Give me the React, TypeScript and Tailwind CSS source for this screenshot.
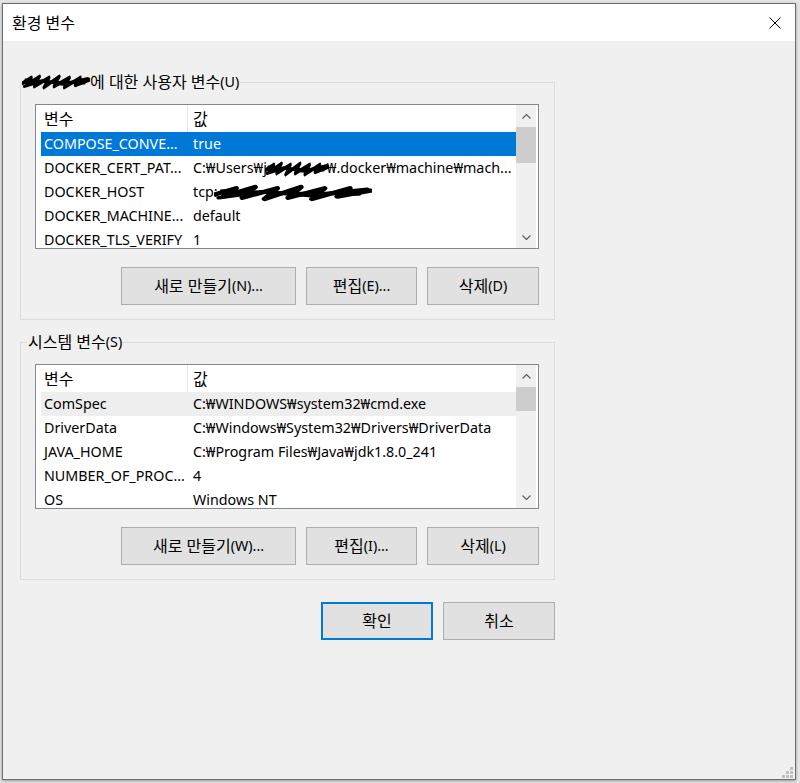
import React from 'react';

type Row = { name: string; value: React.ReactNode };

// Korean glyphs render a touch larger than the Latin ones in the original dialog
function K({ children }: { children: React.ReactNode }) {
  return <span className="text-[16px] leading-none">{children}</span>;
}

function Scribble({ className }: { className: string }) {
  return (
    <svg
      className={className}
      viewBox="0 0 100 20"
      preserveAspectRatio="none"
      fill="none"
      stroke="black"
      strokeLinecap="round"
      strokeLinejoin="round"
    >
      <path
        d="M1 11 L14 6 L6 13 L26 5 L18 14 L40 6 L32 15 L55 5 L47 14 L70 6 L62 15 L86 6 L78 13 L99 8"
        strokeWidth="3.6"
      />
      <path d="M3 14 L30 9 L60 12 L97 7" strokeWidth="3" />
      <path d="M5 8 L45 10 L92 11" strokeWidth="2.4" />
    </svg>
  );
}

function Chevron({ down }: { down?: boolean }) {
  return (
    <svg width="9" height="5" viewBox="0 0 9 5" fill="none" stroke="#606060" strokeWidth="1.2">
      {down ? <polyline points="0.5,0.5 4.5,4.5 8.5,0.5" /> : <polyline points="0.5,4.5 4.5,0.5 8.5,4.5" />}
    </svg>
  );
}

function ListView({
  rows,
  selected,
  tone,
  thumb,
}: {
  rows: Row[];
  selected: number;
  tone: 'blue' | 'gray';
  thumb: string;
}) {
  return (
    <div className="mt-[12px] w-[504px] h-[145px] border border-[#828790] bg-white flex overflow-hidden">
      <div className="w-[480px] flex flex-col overflow-hidden">
        {/* header */}
        <div className="h-[27px] shrink-0 flex items-stretch">
          <div className="w-[151px] pl-[8px] flex items-center">
            <K>변수</K>
          </div>
          <div className="w-px bg-[#e5e5e5]" />
          <div className="pl-[5px] flex items-center">
            <K>값</K>
          </div>
        </div>
        {rows.map((r, i) => {
          const sel = i === selected;
          const bg = sel ? (tone === 'blue' ? 'bg-[#0078d7] text-white' : 'bg-[#eeeeee]') : '';
          return (
            <div key={i} className={`ml-[5px] w-[475px] h-[24px] shrink-0 flex items-center whitespace-nowrap ${bg}`}>
              <div className="w-[147px] pl-[3px] overflow-hidden">{r.name}</div>
              <div className="pl-[5px] flex-1 overflow-hidden">{r.value}</div>
            </div>
          );
        })}
      </div>
      {/* scrollbar */}
      <div className="w-[20px] bg-[#f0f0f0] flex flex-col">
        <div className="h-[22px] flex items-center justify-center">
          <Chevron />
        </div>
        <div className={`${thumb} bg-[#cdcdcd]`} />
        <div className="flex-1" />
        <div className="h-[22px] flex items-center justify-center">
          <Chevron down />
        </div>
      </div>
    </div>
  );
}

function Btn({ w, children, primary }: { w: string; children: React.ReactNode; primary?: boolean }) {
  return (
    <button
      className={`${w} h-[38px] bg-[#e1e1e1] flex items-center justify-center ${
        primary ? 'border-2 border-[#0078d7]' : 'border border-[#adadad]'
      }`}
    >
      {children}
    </button>
  );
}

const userRows: Row[] = [
  { name: 'COMPOSE_CONVE...', value: 'true' },
  {
    name: 'DOCKER_CERT_PAT...',
    value: (
      <span>
        C:₩Users₩j
        <span className="relative inline-block w-[60px] h-[16px] align-middle">
          <Scribble className="absolute -left-[2px] -top-[3px] w-[64px] h-[22px]" />
        </span>
        ₩.docker₩machine₩mach...
      </span>
    ),
  },
  {
    name: 'DOCKER_HOST',
    value: (
      <span>
        tcp:
        <span className="relative inline-block w-[150px] h-[16px] align-middle">
          <Scribble className="absolute -left-[4px] -top-[4px] w-[158px] h-[24px]" />
        </span>
      </span>
    ),
  },
  { name: 'DOCKER_MACHINE...', value: 'default' },
  { name: 'DOCKER_TLS_VERIFY', value: '1' },
];

const sysRows: Row[] = [
  { name: 'ComSpec', value: 'C:₩WINDOWS₩system32₩cmd.exe' },
  { name: 'DriverData', value: 'C:₩Windows₩System32₩Drivers₩DriverData' },
  { name: 'JAVA_HOME', value: 'C:₩Program Files₩Java₩jdk1.8.0_241' },
  { name: 'NUMBER_OF_PROC...', value: '4' },
  { name: 'OS', value: 'Windows NT' },
];

export default function App() {
  return (
    <div className="w-[800px] h-[783px] bg-[#e6e6e6] pt-[3px] pl-[2px] overflow-hidden font-['Noto_Sans','Noto_Sans_CJK_KR',sans-serif] text-[14.3px] text-black">
      <div className="relative w-[794px] h-[777px] border border-[#6d6d6d] bg-[#f0f0f0] flex flex-col shadow-[0_1px_3px_rgba(0,0,0,0.35)]">
        {/* title bar */}
        <div className="h-[37px] shrink-0 bg-white flex items-center justify-between pl-[9px] pr-[14px]">
          <K>환경 변수</K>
          <svg width="12" height="12" viewBox="0 0 12 12" stroke="black" strokeWidth="1">
            <line x1="0.5" y1="0.5" x2="11.5" y2="11.5" />
            <line x1="11.5" y1="0.5" x2="0.5" y2="11.5" />
          </svg>
        </div>

        <div className="ml-[17px] mt-[31px] w-[535px] flex flex-col">
          {/* user variables */}
          <fieldset className="border border-[#dcdcdc] pl-[6px] pr-[15px] pb-[14px]">
            <legend className="px-[1px] h-[20px] flex items-center">
              <span className="relative inline-block w-[62px] h-[16px]">
                <Scribble className="absolute -left-[6px] -top-[3px] w-[68px] h-[22px]" />
              </span>
              <K>에 대한 사용자 변수</K>
              <span>(U)</span>
            </legend>
            <div className="ml-[8px]">
              <ListView rows={userRows} selected={0} tone="blue" thumb="h-[36px]" />
              <div className="mt-[18px] w-[504px] flex justify-end gap-[10px]">
                <Btn w="w-[175px]">
                  <K>새로 만들기</K>(N)...
                </Btn>
                <Btn w="w-[111px]">
                  <K>편집</K>(E)...
                </Btn>
                <Btn w="w-[112px]">
                  <K>삭제</K>(D)
                </Btn>
              </div>
            </div>
          </fieldset>

          {/* system variables */}
          <fieldset className="mt-[12px] border border-[#dcdcdc] pl-[6px] pr-[15px] pb-[14px]">
            <legend className="px-[1px] h-[20px] flex items-center">
              <K>시스템 변수</K>
              <span>(S)</span>
            </legend>
            <div className="ml-[8px]">
              <ListView rows={sysRows} selected={0} tone="gray" thumb="h-[24px]" />
              <div className="mt-[18px] w-[504px] flex justify-end gap-[10px]">
                <Btn w="w-[175px]">
                  <K>새로 만들기</K>(W)...
                </Btn>
                <Btn w="w-[111px]">
                  <K>편집</K>(I)...
                </Btn>
                <Btn w="w-[112px]">
                  <K>삭제</K>(L)
                </Btn>
              </div>
            </div>
          </fieldset>

          <div className="mt-[22px] flex justify-end gap-[10px]">
            <Btn w="w-[112px]" primary>
              <K>확인</K>
            </Btn>
            <Btn w="w-[112px]">
              <K>취소</K>
            </Btn>
          </div>
        </div>

        {/* resize grip */}
        <div className="absolute right-[2px] bottom-[1px] grid grid-cols-3 gap-[1px]">
          <span className="w-[3px] h-[3px]" />
          <span className="w-[3px] h-[3px]" />
          <span className="w-[3px] h-[3px] bg-[#bfbfbf]" />
          <span className="w-[3px] h-[3px]" />
          <span className="w-[3px] h-[3px] bg-[#bfbfbf]" />
          <span className="w-[3px] h-[3px] bg-[#bfbfbf]" />
          <span className="w-[3px] h-[3px] bg-[#bfbfbf]" />
          <span className="w-[3px] h-[3px] bg-[#bfbfbf]" />
          <span className="w-[3px] h-[3px] bg-[#bfbfbf]" />
        </div>
      </div>
    </div>
  );
}
